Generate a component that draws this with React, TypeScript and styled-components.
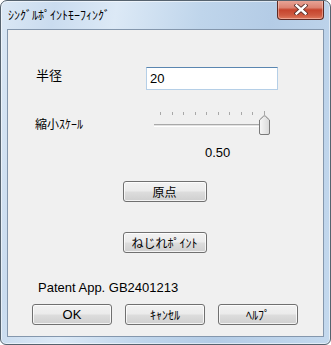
import React from "react";
import styled, { createGlobalStyle } from "styled-components";

const Global = createGlobalStyle`
  html, body { margin: 0; padding: 0; background: #ffffff; }
  body { width: 331px; height: 345px; overflow: hidden; }
  * { box-sizing: border-box; }
`;

const LATIN = `"Liberation Sans", "Noto Sans CJK JP", sans-serif`;
const CJK = `"Noto Sans CJK JP", sans-serif`;

const Window = styled.div`
  width: 331px;
  height: 345px;
  border: 1px solid #56636f;
  border-radius: 7px 7px 6px 6px;
  background: linear-gradient(
    100deg,
    #dbe8f5 0%,
    #cadcef 14%,
    #dce9f6 30%,
    #bfd5eb 52%,
    #b4cce6 70%,
    #c4d9ee 100%
  );
  box-shadow: inset 0 0 0 1px rgba(255, 255, 255, 0.55);
  display: flex;
  flex-direction: column;
  padding: 0 6px 7px 6px;
  overflow: hidden;
`;

const TitleBar = styled.div`
  height: 28px;
  display: flex;
  align-items: flex-start;
  justify-content: space-between;
`;

const Title = styled.div`
  font-family: ${CJK};
  font-size: 12px;
  line-height: 16px;
  color: #000;
  padding: 6px 0 0 1px;
`;

const CloseButton = styled.div`
  width: 47px;
  height: 20px;
  margin-top: -1px;
  border: 1px solid #5e2a24;
  border-top: none;
  border-radius: 0 0 4px 4px;
  background: linear-gradient(
    to bottom,
    #e9a89b 0%,
    #dc8372 40%,
    #c6442d 52%,
    #cf5a41 80%,
    #e07b5f 100%
  );
  box-shadow: inset 0 0 0 1px rgba(255, 220, 210, 0.45);
  display: flex;
  align-items: center;
  justify-content: center;
`;

const Client = styled.div`
  flex: 1;
  border: 1px solid #8497ad;
  background: #f0f0f0;
  display: flex;
  flex-direction: column;
`;

const Row = styled.div<{ $top: number; $left: number }>`
  display: flex;
  align-items: flex-start;
  margin-top: ${(p) => p.$top}px;
  padding-left: ${(p) => p.$left}px;
`;

const Label = styled.div<{ $width: number; $size: number; $pt: number }>`
  width: ${(p) => p.$width}px;
  font-family: ${CJK};
  font-size: ${(p) => p.$size}px;
  line-height: 16px;
  padding-top: ${(p) => p.$pt}px;
  color: #000;
`;

const TextInput = styled.input`
  width: 132px;
  height: 23px;
  border: 1px solid #b5cfe7;
  border-top-color: #5a86b0;
  background: #fff;
  font-family: ${LATIN};
  font-size: 13px;
  color: #000;
  padding: 0 0 0 3px;
  margin: 0;
  outline: none;
`;

const ValueText = styled.div`
  font-family: ${LATIN};
  font-size: 13px;
  line-height: 15px;
  color: #000;
`;

const Centered = styled.div<{ $top: number }>`
  display: flex;
  justify-content: center;
  margin-top: ${(p) => p.$top}px;
  padding-right: 2px;
`;

const Button = styled.button<{ $width: number; $cjk?: boolean }>`
  width: ${(p) => p.$width}px;
  height: 21px;
  margin: 0;
  padding: 0;
  border: 1px solid #707070;
  border-radius: 3px;
  background: linear-gradient(
    to bottom,
    #f2f2f2 0%,
    #ebebeb 48%,
    #dddddd 52%,
    #cfcfcf 100%
  );
  box-shadow: inset 0 0 0 1px rgba(255, 255, 255, 0.75);
  font-family: ${(p) => (p.$cjk ? CJK : LATIN)};
  font-size: ${(p) => (p.$cjk ? 12 : 13)}px;
  line-height: 17px;
  color: #000;
  display: flex;
  align-items: center;
  justify-content: center;
`;

const ButtonBar = styled.div`
  display: flex;
  gap: 13px;
  padding-left: 24px;
  margin-top: 9px;
`;

const Slider = () => {
  const ticks = Array.from({ length: 10 }, (_, i) => Math.round(7 + (i * 104) / 9));
  return (
    <svg width="120" height="25" viewBox="0 0 120 25">
      <defs>
        <linearGradient id="thumb" x1="0" y1="0" x2="1" y2="0">
          <stop offset="0" stopColor="#f7f7f7" />
          <stop offset="1" stopColor="#d9d9d9" />
        </linearGradient>
      </defs>
      {ticks.map((x, i) => (
        <line
          key={i}
          x1={x + 0.5}
          x2={x + 0.5}
          y1={i === 9 ? 0 : 1}
          y2={4}
          stroke="#a8a8a8"
          strokeWidth="1"
        />
      ))}
      <line x1="1" x2="113" y1="13.5" y2="13.5" stroke="#a9a9a9" />
      <line x1="1" x2="113" y1="14.5" y2="14.5" stroke="#e2e2e2" />
      <line x1="1" x2="113" y1="15.5" y2="15.5" stroke="#ffffff" />
      <path
        d="M106.5 9 L110.5 5.2 Q111.5 4.5 112.5 5.2 L116.5 9 L116.5 22 Q116.5 23.5 115 23.5 L108 23.5 Q106.5 23.5 106.5 22 Z"
        fill="url(#thumb)"
        stroke="#7a7a7a"
        strokeWidth="1"
      />
    </svg>
  );
};

const SliderBox = styled.div`
  margin-top: -5px;
`;

const CloseX = () => (
  <svg width="14" height="11" viewBox="0 0 14 11">
    <path d="M2.5 1.5 L11.5 9.5 M11.5 1.5 L2.5 9.5" stroke="#5a2f2a" strokeWidth="4.2" strokeLinecap="square" />
    <path d="M2.5 1.5 L11.5 9.5 M11.5 1.5 L2.5 9.5" stroke="#ffffff" strokeWidth="2.4" strokeLinecap="square" />
  </svg>
);

export default function App() {
  return (
    <>
      <Global />
      <Window>
        <TitleBar>
          <Title>ｼﾝｸﾞﾙﾎﾟｲﾝﾄﾓｰﾌｨﾝｸﾞ</Title>
          <CloseButton>
            <CloseX />
          </CloseButton>
        </TitleBar>
        <Client>
          <Row $top={37} $left={28}>
            <Label $width={110} $size={13} $pt={0}>半径</Label>
            <TextInput defaultValue="20" />
          </Row>
          <Row $top={26} $left={27}>
            <Label $width={118} $size={12} $pt={0}>縮小ｽｹｰﾙ</Label>
            <SliderBox>
              <Slider />
            </SliderBox>
          </Row>
          <Row $top={5} $left={197}>
            <ValueText>0.50</ValueText>
          </Row>
          <Centered $top={21}>
            <Button $width={84} $cjk>原点</Button>
          </Centered>
          <Centered $top={30}>
            <Button $width={84} $cjk>ねじれﾎﾟｲﾝﾄ</Button>
          </Centered>
          <Row $top={27} $left={30}>
            <ValueText>Patent App. GB2401213</ValueText>
          </Row>
          <ButtonBar>
            <Button $width={80}>OK</Button>
            <Button $width={80} $cjk>ｷｬﾝｾﾙ</Button>
            <Button $width={80} $cjk>ﾍﾙﾌﾟ</Button>
          </ButtonBar>
        </Client>
      </Window>
    </>
  );
}
